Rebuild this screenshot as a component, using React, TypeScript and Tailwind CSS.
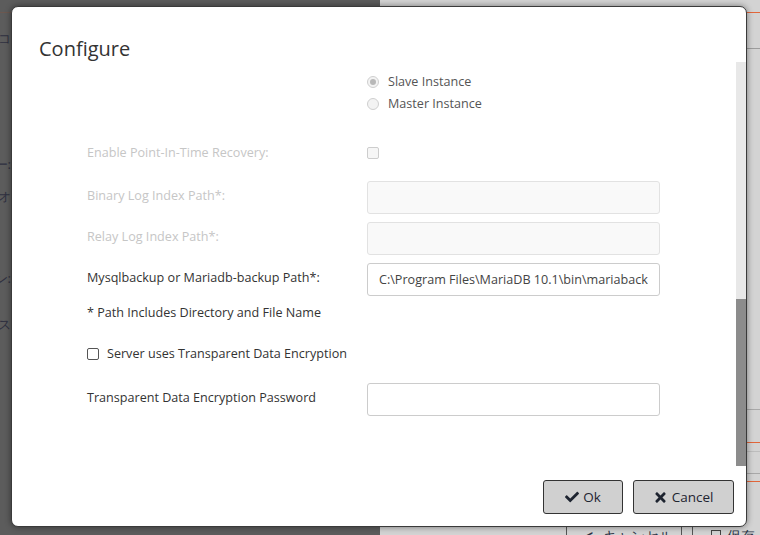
import { FaCheck, FaTimes } from "react-icons/fa";

// Modal "Configure" dialog laid over a dimmed backup-job page.

const PATH_VALUE = "C:\\Program Files\\MariaDB 10.1\\bin\\mariabackup.exe";

function Radio({ checked, label }: { checked?: boolean; label: string }) {
  return (
    <div className="flex items-center h-[22px]">
      <span className="w-[12px] h-[12px] rounded-full border border-[#cfcfcf] bg-[#f3f3f3] flex items-center justify-center">
        {checked && <span className="w-[6px] h-[6px] rounded-full bg-[#b8b8b8]" />}
      </span>
      <span className="ml-[9px] text-[12.6px] text-[#555]">{label}</span>
    </div>
  );
}

function Row({
  label,
  disabled = false,
  children,
}: {
  label: string;
  disabled?: boolean;
  children: React.ReactNode;
}) {
  return (
    <div className="flex items-start">
      <div
        className={`w-[280px] pt-[5px] leading-[20px] text-[12.6px] ${
          disabled ? "text-[#c6c6c6]" : "text-[#333]"
        }`}
      >
        {label}
      </div>
      {children}
    </div>
  );
}

function TextBox({ disabled = false, value }: { disabled?: boolean; value?: string }) {
  return (
    <input
      readOnly
      disabled={disabled}
      defaultValue={value}
      className={`w-[293px] h-[33px] rounded-[3px] border px-[11px] text-[12.6px] text-[#444] outline-none font-['Open_Sans',sans-serif] ${
        disabled ? "bg-[#f9f9f9] border-[#e2e2e2]" : "bg-white border-[#cccccc]"
      }`}
    />
  );
}

function Backdrop() {
  return (
    <div className="flex w-full h-full">
      <div className="w-[380px] bg-[#5c5c5c] flex flex-col">
        <div className="h-[12px]" />
        <div className="h-px bg-[#6c5850]" />
        <div className="w-[11px] overflow-hidden flex flex-col text-[13px] text-[#2f3040] whitespace-nowrap">
          <div className="flex justify-end mt-[16px] h-[20px]">ジョブコ</div>
          <div className="flex justify-end mt-[106px] h-[20px]">ポリシー:</div>
          <div className="flex justify-end mt-[12px] h-[20px]">オプオ</div>
          <div className="flex justify-end mt-[62px] h-[20px]">ジョン:</div>
          <div className="flex justify-end mt-[26px] h-[20px]">データス</div>
        </div>
      </div>
      <div className="flex-1 bg-[#d3d3d3] flex flex-col">
        <div className="h-[12px] shrink-0" />
        <div className="h-px shrink-0 bg-[#e2663a]" />
        <div className="h-[35px] shrink-0" />
        <div className="h-px shrink-0 bg-[#9c9c9c]" />
        <div className="h-[360px] shrink-0" />
        <div className="h-px shrink-0 bg-[#a8a8a8]" />
        <div className="h-[32px] shrink-0" />
        <div className="h-px shrink-0 bg-[#e2663a]" />
        <div className="h-[8px] shrink-0" />
        <div className="h-px shrink-0 bg-[#bdbdbd]" />
        <div className="h-[21px] shrink-0" />
        <div className="h-px shrink-0 bg-[#a8a8a8]" />
        <div className="h-[7px] shrink-0" />
        <div className="h-px shrink-0 bg-[#e2663a]" />
        <div className="flex-1 min-h-0 overflow-hidden flex items-start pl-[186px] pt-[38px] text-[14px] text-[#2c3446]">
          <div className="w-[116px] h-[30px] shrink-0 border-x border-[#555] flex items-center pl-[18px] gap-[10px]">
            <span className="font-bold">&lt;</span>
            <span>キャンセル</span>
          </div>
          <div className="ml-[10px] flex-1 h-[30px] shrink-0 border-l border-[#555] flex items-center pl-[18px] gap-[6px]">
            <span className="w-[10px] h-[10px] border border-[#444]" />
            <span>保存</span>
          </div>
        </div>
      </div>
    </div>
  );
}

export default function App() {
  return (
    <div className="relative w-[760px] h-[535px] overflow-hidden font-['Open_Sans',sans-serif]">
      <Backdrop />

      <div className="absolute left-[11px] top-[6px] w-[736px] h-[521px] bg-white border border-[#3a3a3a] rounded-[7px] shadow-[0_0_6px_rgba(0,0,0,0.45)] flex flex-col overflow-hidden">
        <div className="h-[55px] pl-[27px] pt-[28px] text-[20px] leading-[28px] text-[#333]">
          Configure
        </div>

        <div className="h-[404px] flex">
          <div className="flex-1 pl-[75px] pt-[9px] flex flex-col">
            <div className="pl-[280px]">
              <Radio checked label="Slave Instance" />
              <Radio label="Master Instance" />
            </div>

            <div className="mt-[27px] flex items-center h-[22px]">
              <div className="w-[280px] text-[12.6px] text-[#c6c6c6]">
                Enable Point-In-Time Recovery:
              </div>
              <span className="w-[12px] h-[12px] rounded-[2px] border border-[#cdcdcd] bg-[#f6f6f6]" />
            </div>

            <div className="mt-[17px] flex flex-col gap-[8px]">
              <Row label="Binary Log Index Path*:" disabled>
                <TextBox disabled />
              </Row>
              <Row label="Relay Log Index Path*:" disabled>
                <TextBox disabled />
              </Row>
              <Row label="Mysqlbackup or Mariadb-backup Path*:">
                <TextBox value={PATH_VALUE} />
              </Row>
            </div>

            <div className="mt-[6px] h-[22px] flex items-center text-[12.6px] text-[#333]">
              * Path Includes Directory and File Name
            </div>

            <div className="mt-[19px] h-[22px] flex items-center text-[12.6px] text-[#333]">
              <span className="w-[12px] h-[12px] rounded-[2px] border border-[#555] bg-white" />
              <span className="ml-[8px]">Server uses Transparent Data Encryption</span>
            </div>

            <div className="mt-[18px]">
              <Row label="Transparent Data Encryption Password">
                <TextBox />
              </Row>
            </div>
          </div>

          <div className="w-[10px] bg-[#e8e8e8] flex flex-col">
            <div className="flex-1" />
            <div className="h-[167px] bg-[#8c8c8c]" />
          </div>
        </div>

        <div className="flex justify-end gap-[10px] pr-[12px] pt-[14px]">
          <button className="w-[80px] h-[34px] rounded-[3px] border border-[#333] bg-[#d0d0d0] flex items-center justify-center gap-[4px] text-[13.5px] text-[#1e2430]">
            <FaCheck className="w-[14px] h-[14px]" />
            <span>Ok</span>
          </button>
          <button className="w-[101px] h-[34px] rounded-[3px] border border-[#333] bg-[#d0d0d0] flex items-center justify-center gap-[5px] text-[13.5px] text-[#1e2430]">
            <FaTimes className="w-[13px] h-[15px]" />
            <span>Cancel</span>
          </button>
        </div>
      </div>
    </div>
  );
}
